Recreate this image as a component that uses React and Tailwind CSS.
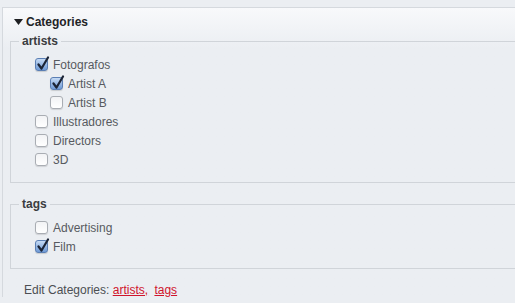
import { useState } from 'react'

const font = { fontFamily: '"Liberation Sans", Arial, sans-serif' }

function Box({ checked }) {
  if (checked) {
    return (
      <span className="relative inline-block w-[13px] h-[13px] shrink-0 rounded-[3px] border border-[#5b7fb4] bg-gradient-to-b from-[#c5daf4] to-[#6f9ad6] shadow-[0_1px_1px_rgba(0,0,0,0.15)]">
        <svg className="absolute -top-[3px] left-[1px]" width="13" height="15" viewBox="0 0 13 15">
          <path d="M1.5 8.5 L4.5 12.5 L11 1.5" fill="none" stroke="#1b2436" strokeWidth="2.2" strokeLinecap="round" strokeLinejoin="round" />
        </svg>
      </span>
    )
  }
  return (
    <span className="inline-block w-[13px] h-[13px] shrink-0 rounded-[3px] border border-[#a9adb3] bg-gradient-to-b from-[#f2f3f5] to-[#ffffff] shadow-[0_1px_1px_rgba(0,0,0,0.12)]" />
  )
}

function Row({ label, checked, level = 0, onToggle }) {
  return (
    <label
      onClick={onToggle}
      className={`flex items-center h-[19px] gap-[5px] cursor-pointer ${level ? 'pl-[39px]' : 'pl-[24px]'}`}
    >
      <Box checked={checked} />
      <span className="text-[12px] leading-[14px] text-[#575a60]">{label}</span>
    </label>
  )
}

export default function App() {
  const [checks, setChecks] = useState({
    Fotografos: true,
    'Artist A': true,
    'Artist B': false,
    Illustradores: false,
    Directors: false,
    '3D': false,
    Advertising: false,
    Film: true,
  })

  const toggle = (k) => setChecks((prev) => ({ ...prev, [k]: !prev[k] }))

  const artists = [
    ['Fotografos', 0],
    ['Artist A', 1],
    ['Artist B', 1],
    ['Illustradores', 0],
    ['Directors', 0],
    ['3D', 0],
  ]

  return (
    <div className="w-[515px] h-[303px] overflow-hidden bg-[#ebeef2] pt-[7px] pl-[2px]" style={font}>
      <div className="border-t border-l border-[#d5d9de] bg-gradient-to-b from-[#f8f9fb] via-[#ebeef2] via-[40px] to-[#ebeef2] pl-[7px] w-[600px]">
        <div className="flex items-center h-[26px] pt-[1px] pl-[4px] gap-[3px]">
          <svg width="9" height="6" viewBox="0 0 9 6">
            <path d="M0 0 H9 L4.5 6 Z" fill="#1e1f22" />
          </svg>
          <span className="text-[12px] leading-[14px] font-bold text-[#222326]">Categories</span>
        </div>

        <fieldset className="border border-[#d0d4d9] w-[560px] pb-[13px]">
          <legend className="ml-[8px] px-[3px] text-[12px] leading-[14px] font-bold text-[#3a3c40]">artists</legend>
          <div className="pt-[7px]">
            {artists.map(([name, level]) => (
              <Row key={name} label={name} level={level} checked={checks[name]} onToggle={() => toggle(name)} />
            ))}
          </div>
        </fieldset>

        <fieldset className="border border-[#d0d4d9] w-[560px] mt-[14px] pb-[12px]">
          <legend className="ml-[8px] px-[3px] text-[12px] leading-[14px] font-bold text-[#3a3c40]">tags</legend>
          <div className="pt-[7px]">
            {['Advertising', 'Film'].map((name) => (
              <Row key={name} label={name} checked={checks[name]} onToggle={() => toggle(name)} />
            ))}
          </div>
        </fieldset>

        <p className="mt-[14px] pl-[14px] text-[12px] leading-[14px] text-[#4b4e53]">
          Edit Categories:{' '}
          <a href="#" className="text-[#d0142c] underline">artists,</a>{'  '}
          <a href="#" className="ml-[3px] text-[#d0142c] underline">tags</a>
        </p>
      </div>
    </div>
  )
}
